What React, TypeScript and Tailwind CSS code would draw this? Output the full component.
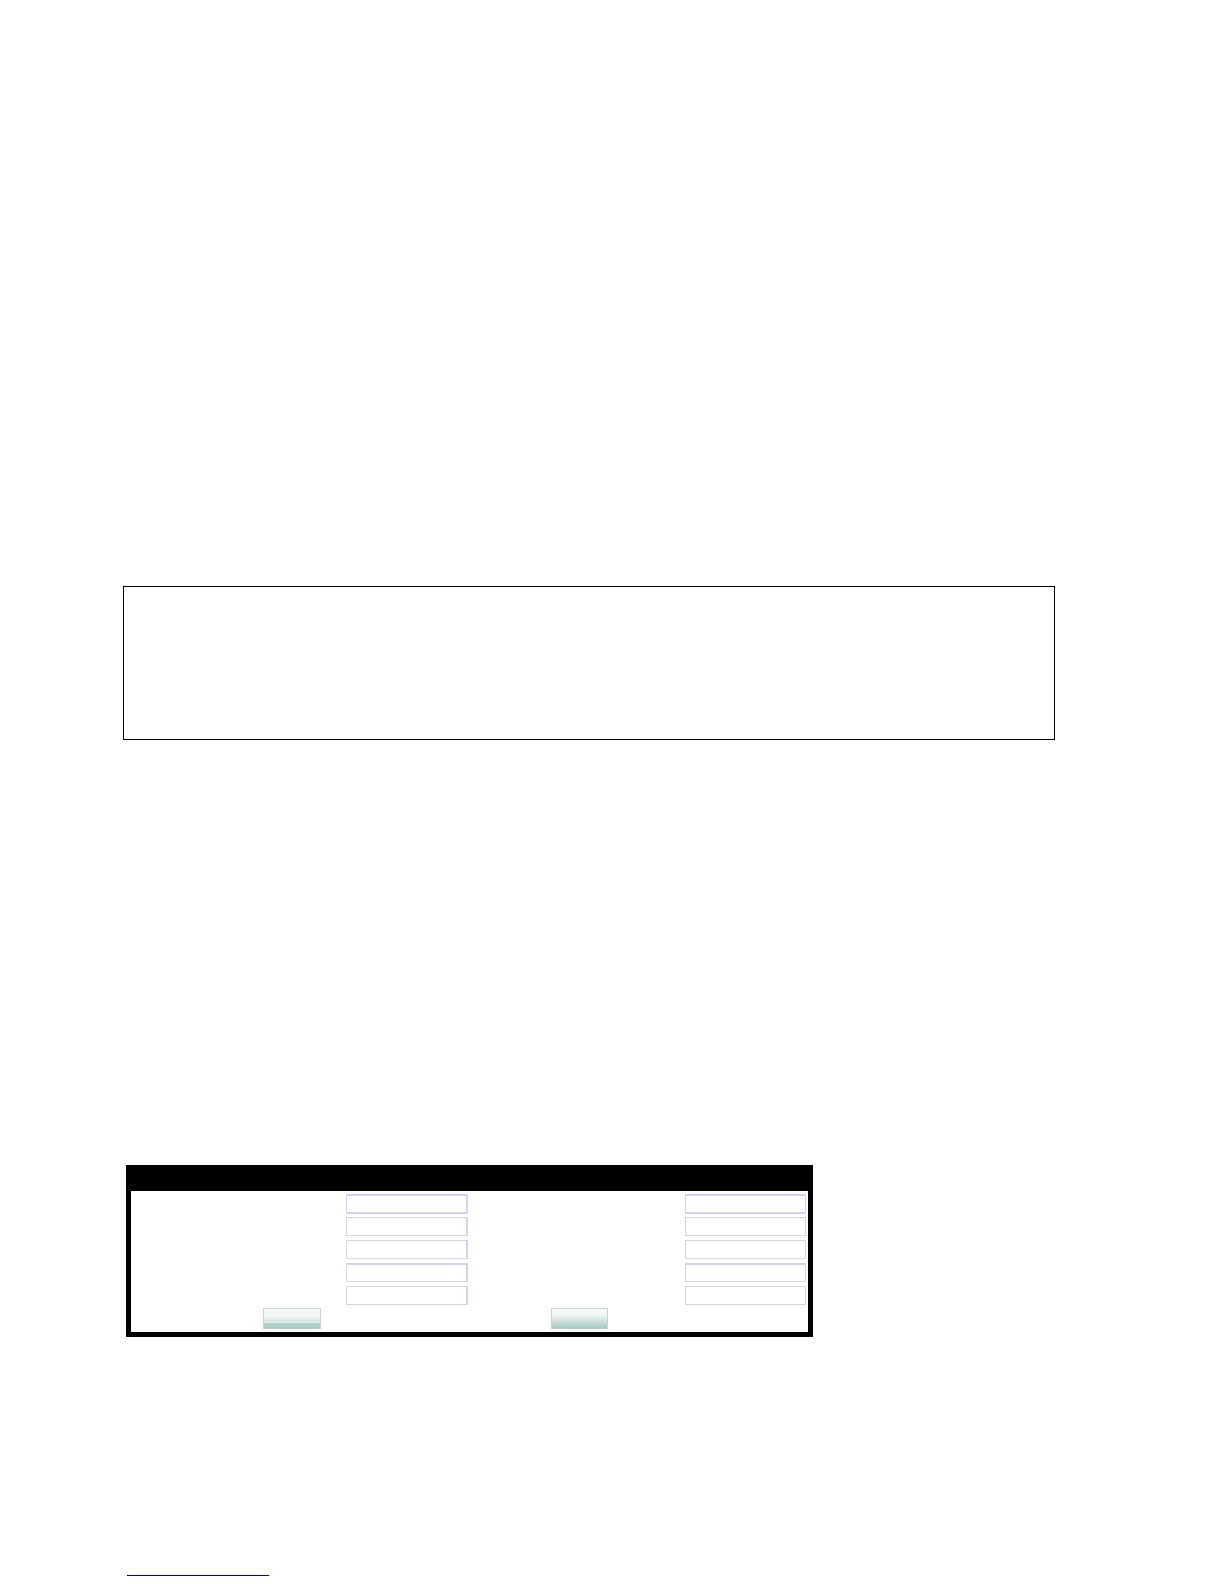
type EdgeWeight = 'both' | 'top' | 'thin';

const ROWS: { id: string; edge: EdgeWeight }[] = [
    { id: 'row-1', edge: 'both' },
    { id: 'row-2', edge: 'thin' },
    { id: 'row-3', edge: 'thin' },
    { id: 'row-4', edge: 'top' },
    { id: 'row-5', edge: 'thin' },
];

// Horizontal edges get heavier and more violet on some rows
const EDGE_CLASSES: Record<EdgeWeight, string> = {
    both: 'h-5 border-y-2 border-y-[#d3d2ee]',
    top: 'h-[19px] border-t-2 border-b border-t-[#d3d2ee] border-b-[#d5d5e2]',
    thin: 'h-[19px] border-y border-y-[#d5d5e0]',
};

function Field({ id, label, edge, side }: { id: string; label: string; edge: EdgeWeight; side: 'left' | 'right' }) {
    const sideClasses =
        side === 'left'
            ? 'col-start-2 border-l border-r-2 border-l-[#d5d5e2] border-r-[#d3d2ee]'
            : 'col-start-4 border-x border-x-[#d3d5e2]';

    return (
        <input
            id={id}
            type="text"
            aria-label={label}
            className={`w-full bg-white px-1 text-xs outline-none ${EDGE_CLASSES[edge]} ${sideClasses}`}
        />
    );
}

function FormPanel() {
    return (
        <form
            className="w-full max-w-[687px] border-[5px] border-t-0 border-black bg-white"
            onSubmit={(e) => e.preventDefault()}
        >
            <div className="h-[26px] bg-black" />

            <div className="pt-[2px] pr-[2px]">
                {ROWS.map((row, i) => (
                    <div key={row.id} className="grid h-[23px] grid-cols-[215fr_122px_217fr_121px] items-start pt-px">
                        <Field id={`${row.id}-left`} label={`Left value ${i + 1}`} edge={row.edge} side="left" />
                        <Field id={`${row.id}-right`} label={`Right value ${i + 1}`} edge={row.edge} side="right" />
                    </div>
                ))}
            </div>

            {/* Buttons */}
            <div className="flex gap-[230px] pb-[3px] pl-[132px]">
                <button
                    type="submit"
                    aria-label="Submit"
                    className="h-[21px] w-[58px] rounded-[1px] border border-[#c8d2d0] border-b-[#b4c9c5] bg-[linear-gradient(to_bottom,#f8fcfb_0px,#eef4f3_7px,#d5e2e0_13px,#e0eeeb_13px,#e0eeeb_14px,#b4d5ce_14px,#a4ccc4_19px)]"
                />
                <button
                    type="reset"
                    aria-label="Reset"
                    className="h-[21px] w-[57px] rounded-[1px] border border-[#c8d2d0] border-b-[#b4c9c5] bg-[linear-gradient(to_bottom,#f8fcfb_0%,#eef5f4_35%,#cfdfdd_65%,#a4ccc4_100%)]"
                />
            </div>
        </form>
    );
}

export default function App() {
    return (
        <main className="min-h-screen bg-white pt-[586px] pr-[169px] pb-2 pl-[123px] font-['Liberation_Sans',sans-serif]">
            <section className="min-h-[154px] border border-black" />

            <div className="px-[3px] pt-[425px]">
                <FormPanel />
            </div>

            <div className="px-1 pt-[224px]">
                <a href="#" aria-label="Footer link" className="block h-[15px] w-[142px] border-b border-[#000099]" />
            </div>
        </main>
    );
}
